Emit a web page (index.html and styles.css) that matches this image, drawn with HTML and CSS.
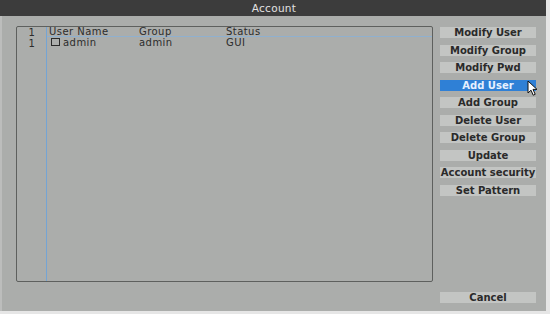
FILE: index.html
```html
<!DOCTYPE html>
<html>
<head>
<meta charset="utf-8">
<title>Account</title>
<link rel="stylesheet" href="styles.css">
</head>
<body>
<div class="window">
  <div class="titlebar">Account</div>
  <div class="content">
    <div class="table">
      <div class="idx-col">
        <div class="cell idx">1</div>
        <div class="cell idx">1</div>
      </div>
      <div class="data-col">
        <div class="row head">
          <span class="c1">User Name</span>
          <span class="c2">Group</span>
          <span class="c3">Status</span>
        </div>
        <div class="row">
          <span class="c1"><span class="check"></span>admin</span>
          <span class="c2">admin</span>
          <span class="c3">GUI</span>
        </div>
      </div>
    </div>
    <div class="side">
      <div class="buttons">
        <div class="btn">Modify User</div>
        <div class="btn">Modify Group</div>
        <div class="btn">Modify Pwd</div>
        <div class="btn active">Add User</div>
        <div class="btn">Add Group</div>
        <div class="btn">Delete User</div>
        <div class="btn">Delete Group</div>
        <div class="btn">Update</div>
        <div class="btn">Account security</div>
        <div class="btn">Set Pattern</div>
      </div>
      <div class="btn cancel">Cancel</div>
    </div>
  </div>
  <svg class="cursor" width="12" height="17" viewBox="0 0 12 17">
    <path d="M1 1 L1 13 L4 10.2 L6.2 15.2 L8.2 14.3 L6 9.4 L10 9.4 Z" fill="#ffffff" stroke="#111" stroke-width="1" stroke-linejoin="round"/>
  </svg>
</div>
</body>
</html>
```

FILE: styles.css
```css
* { box-sizing: border-box; }
html, body { margin: 0; padding: 0; }
body {
  width: 550px;
  height: 314px;
  overflow: hidden;
  background: #e6e6e6;
  font-family: "DejaVu Sans", "Liberation Sans", sans-serif;
}
.window {
  position: relative;
  width: 546px;
  height: 311px;
  background: #abadab;
  border-left: 2px solid #bcbdbc;
  display: flex;
  flex-direction: column;
}
.titlebar {
  height: 16px;
  background: #3c3c3c;
  color: #e2e2e2;
  font-size: 10.5px;
  letter-spacing: 0.3px;
  line-height: 17px;
  text-align: center;
  margin-left: -2px;
  padding-left: 2px;
}
.content {
  flex: 1;
  display: flex;
  padding: 10px 0 8px 14px;
}
.table {
  width: 417px;
  height: 256px;
  border: 1px solid #5e605e;
  border-radius: 2px;
  display: flex;
  color: #2c2c2c;
  font-size: 10px;
  letter-spacing: 0.45px;
}
.idx-col {
  width: 29px;
}
.cell.idx {
  height: 10.5px;
  line-height: 11px;
  text-align: center;
  padding-left: 1px;
}
.data-col {
  flex: 1;
  border-left: 1px solid #74a4d4;
}
.row {
  display: flex;
  height: 10.5px;
  line-height: 11px;
}
.row.head {
  height: 10px;
  line-height: 10px;
  border-bottom: 1px solid #8fb0cf;
}
.c1 { width: 92px; padding-left: 2px; display: flex; align-items: center; }
.c2 { width: 87px; }
.c3 { flex: 1; }
.check {
  width: 9px;
  height: 8px;
  border: 1px solid #2a2a2a;
  margin: 0 3px 0 2px;
}
.side {
  margin-left: 7px;
  width: 96px;
  display: flex;
  flex-direction: column;
  justify-content: space-between;
  padding-top: 1px;
}
.buttons {
  display: flex;
  flex-direction: column;
  gap: 6.56px;
}
.btn {
  height: 11px;
  background: #c3c5c3;
  color: #2a2a2a;
  font-size: 10px;
  font-weight: bold;
  line-height: 11px;
  text-align: center;
  white-space: nowrap;
  letter-spacing: 0;
}
.btn.active {
  background: #2f80d6;
  color: #e6f0ff;
}
.cursor {
  position: absolute;
  left: 525px;
  top: 80px;
}
```
